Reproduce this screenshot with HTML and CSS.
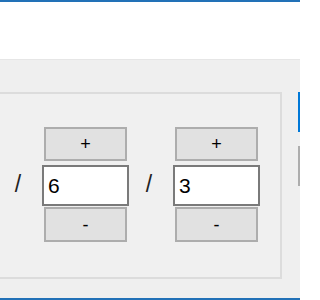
FILE: index.html
```html
<!DOCTYPE html>
<html>
<head>
<meta charset="utf-8">
<link rel="stylesheet" href="styles.css">
</head>
<body>
<div class="frame">
  <div class="topbar"></div>
  <div class="header"></div>
  <div class="main">
    <div class="panel">
      <span class="slash">/</span>
      <div class="spin">
        <button class="btn">+</button>
        <input class="field" type="text" value="6">
        <button class="btn minus">-</button>
      </div>
      <span class="slash">/</span>
      <div class="spin">
        <button class="btn">+</button>
        <input class="field" type="text" value="3">
        <button class="btn minus">-</button>
      </div>
    </div>
    <div class="side">
      <button class="sbtn primary"></button>
      <button class="sbtn"></button>
    </div>
  </div>
  <div class="bottombar"></div>
</div>
</body>
</html>
```
FILE: styles.css
```css
html, body {
  margin: 0;
  padding: 0;
  overflow: hidden;
}
.frame {
  width: 300px;
  height: 300px;
  overflow: hidden;
  background: #efefef;
  font-family: "Liberation Sans", Arial, sans-serif;
  display: flex;
  flex-direction: column;
}
.topbar {
  height: 2px;
  background: #2271b7;
  flex: none;
}
.header {
  height: 57px;
  background: #ffffff;
  border-bottom: 1px solid #e6e6e6;
  flex: none;
}
.main {
  display: flex;
  align-items: flex-start;
  margin-top: 32px;
  flex: none;
}
.panel {
  flex: none;
  margin-left: -4px;
  width: 286px;
  box-sizing: border-box;
  border: 2px solid #dcdcdc;
  background: #f0f0f0;
  padding: 33px 0 35px 0;
  display: flex;
  align-items: center;
}
.slash {
  width: 44px;
  box-sizing: border-box;
  padding-right: 4px;
  text-align: center;
  font-size: 23px;
  color: #222;
  flex: none;
}
.spin {
  width: 87px;
  display: flex;
  flex-direction: column;
  align-items: center;
  flex: none;
}
.btn {
  width: 83px;
  height: 34px;
  box-sizing: border-box;
  border: 2px solid #adadad;
  background: #e1e1e1;
  font-family: "Liberation Sans", Arial, sans-serif;
  font-size: 18px;
  color: #000;
  padding: 0;
  margin: 0;
  line-height: 1;
}
.btn.minus {
  height: 35px;
  margin-top: 1px;
}
.field {
  width: 87px;
  height: 41px;
  box-sizing: border-box;
  border: 2px solid #7a7a7a;
  background: #fff;
  margin: 4px 0 0 0;
  padding: 0 0 0 4px;
  font-family: "Liberation Sans", Arial, sans-serif;
  font-size: 21px;
  color: #000;
  outline: none;
}
.side {
  margin-left: 16px;
  display: flex;
  flex-direction: column;
  flex: none;
}
.sbtn {
  width: 80px;
  height: 40px;
  box-sizing: border-box;
  border: 2px solid #adadad;
  background: #e1e1e1;
  margin: 0 0 14px 0;
  padding: 0;
}
.sbtn.primary {
  border-color: #0078d7;
}
.bottombar {
  margin-top: auto;
  height: 2px;
  background: #2271b7;
  flex: none;
}
```
